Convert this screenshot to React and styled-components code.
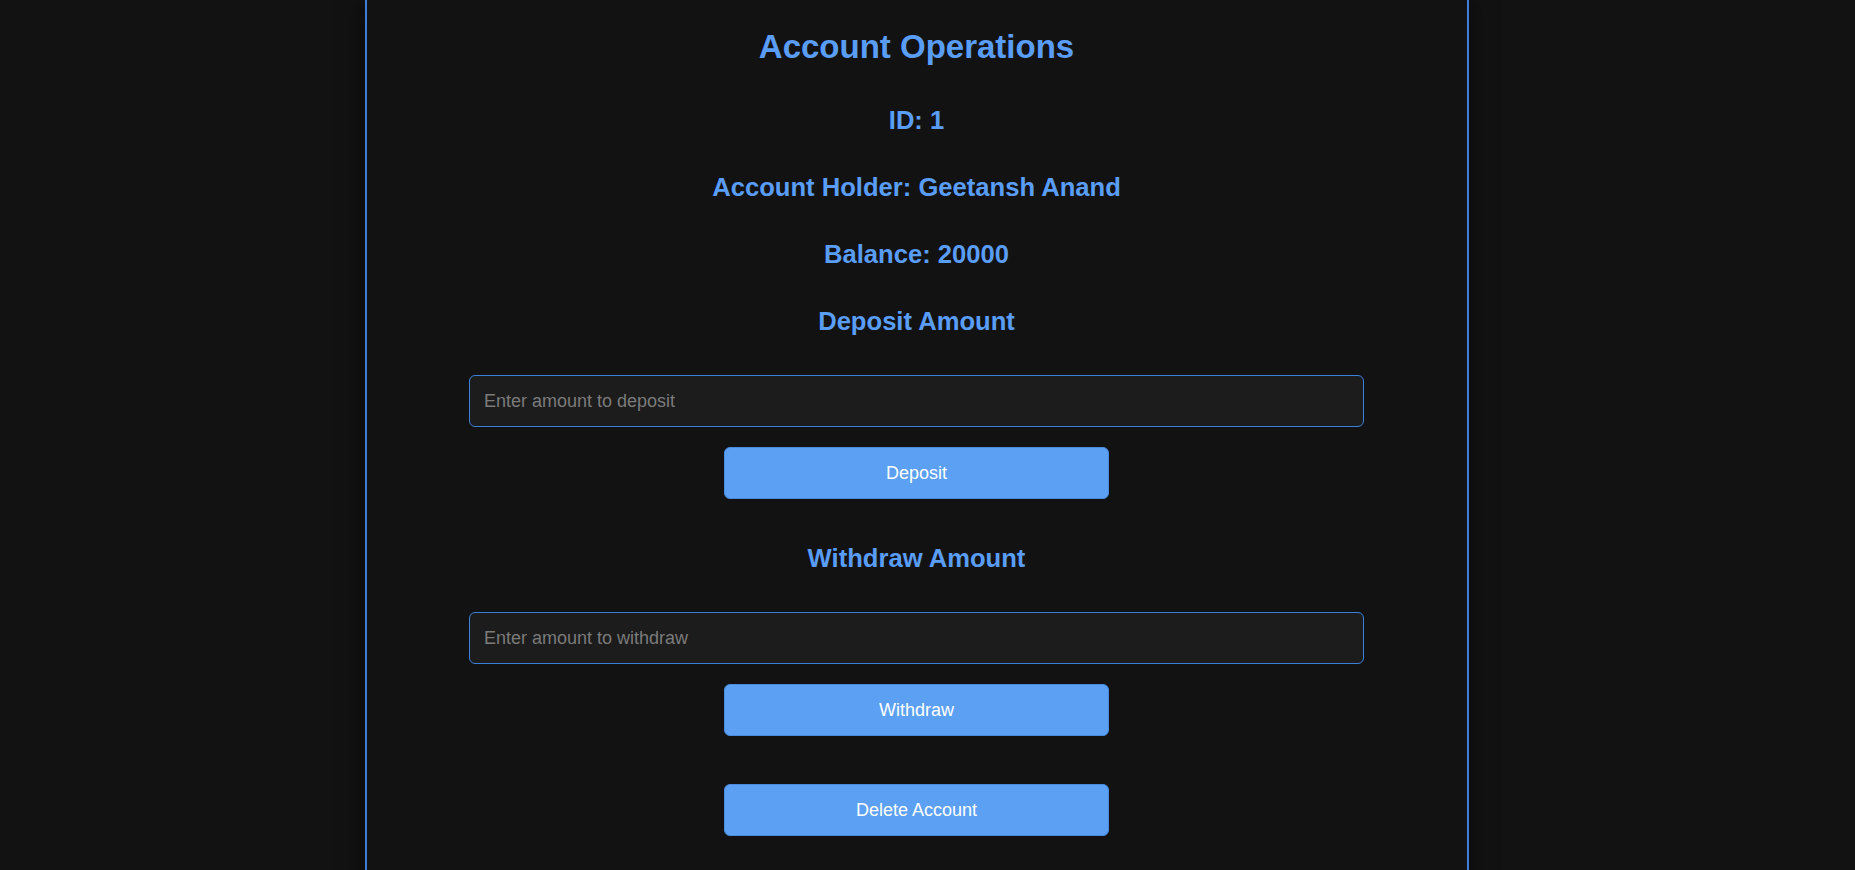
import React from 'react'
import styled, { createGlobalStyle } from 'styled-components'

const GlobalStyle = createGlobalStyle`
  html, body {
    margin: 0;
    padding: 0;
    background: #121212;
    overflow: hidden;
  }
  body {
    font-family: 'Liberation Sans', Arial, sans-serif;
  }
`

const Page = styled.div`
  display: flex;
  justify-content: center;
  padding-right: 22px;
  min-height: 100vh;
`

const Panel = styled.main`
  width: 1100px;
  min-height: 100vh;
  border-left: 2px solid #3b7fdb;
  border-right: 2px solid #3b7fdb;
  background: #121212;
  box-shadow: 0 0 22px rgba(0, 0, 0, 0.55);
  padding-top: 28px;
  display: flex;
  flex-direction: column;
  align-items: center;
`

const Title = styled.h1`
  margin: 0 0 41px;
  font-size: 33px;
  line-height: 37px;
  font-weight: 700;
  color: #5a9df5;
`

const Heading = styled.h2`
  margin: ${p => (p.$spaced ? '45px' : '0')} 0 ${p => (p.$last ? '39px' : '38px')};
  font-size: 25.6px;
  line-height: 29px;
  font-weight: 700;
  color: #5a9df5;
`

const AmountInput = styled.input`
  box-sizing: border-box;
  width: 895px;
  height: 52px;
  margin: 0 0 20px;
  padding: 0 14px;
  background: #1c1c1c;
  border: 1px solid #3b7fdb;
  border-radius: 6px;
  color: #e6e6e6;
  font-family: 'Liberation Sans', Arial, sans-serif;
  font-size: 18px;
  outline: none;

  &::placeholder {
    color: #7b7b7b;
  }
`

const ActionButton = styled.button`
  box-sizing: border-box;
  width: 385px;
  height: 52px;
  margin-top: ${p => p.$gap || 0}px;
  background: #5ca0f3;
  border: 1px solid #4a8be2;
  border-radius: 6px;
  color: #ffffff;
  font-family: 'Liberation Sans', Arial, sans-serif;
  font-size: 18px;
  cursor: pointer;
`

export default function App() {
  return (
    <>
      <GlobalStyle />
      <Page>
        <Panel>
          <Title>Account Operations</Title>
          <Heading>ID: 1</Heading>
          <Heading>Account Holder: Geetansh Anand</Heading>
          <Heading>Balance: 20000</Heading>

          <Heading $last>Deposit Amount</Heading>
          <AmountInput type="number" placeholder="Enter amount to deposit" />
          <ActionButton>Deposit</ActionButton>

          <Heading $spaced $last>Withdraw Amount</Heading>
          <AmountInput type="number" placeholder="Enter amount to withdraw" />
          <ActionButton>Withdraw</ActionButton>

          <ActionButton $gap={48}>Delete Account</ActionButton>
        </Panel>
      </Page>
    </>
  )
}
